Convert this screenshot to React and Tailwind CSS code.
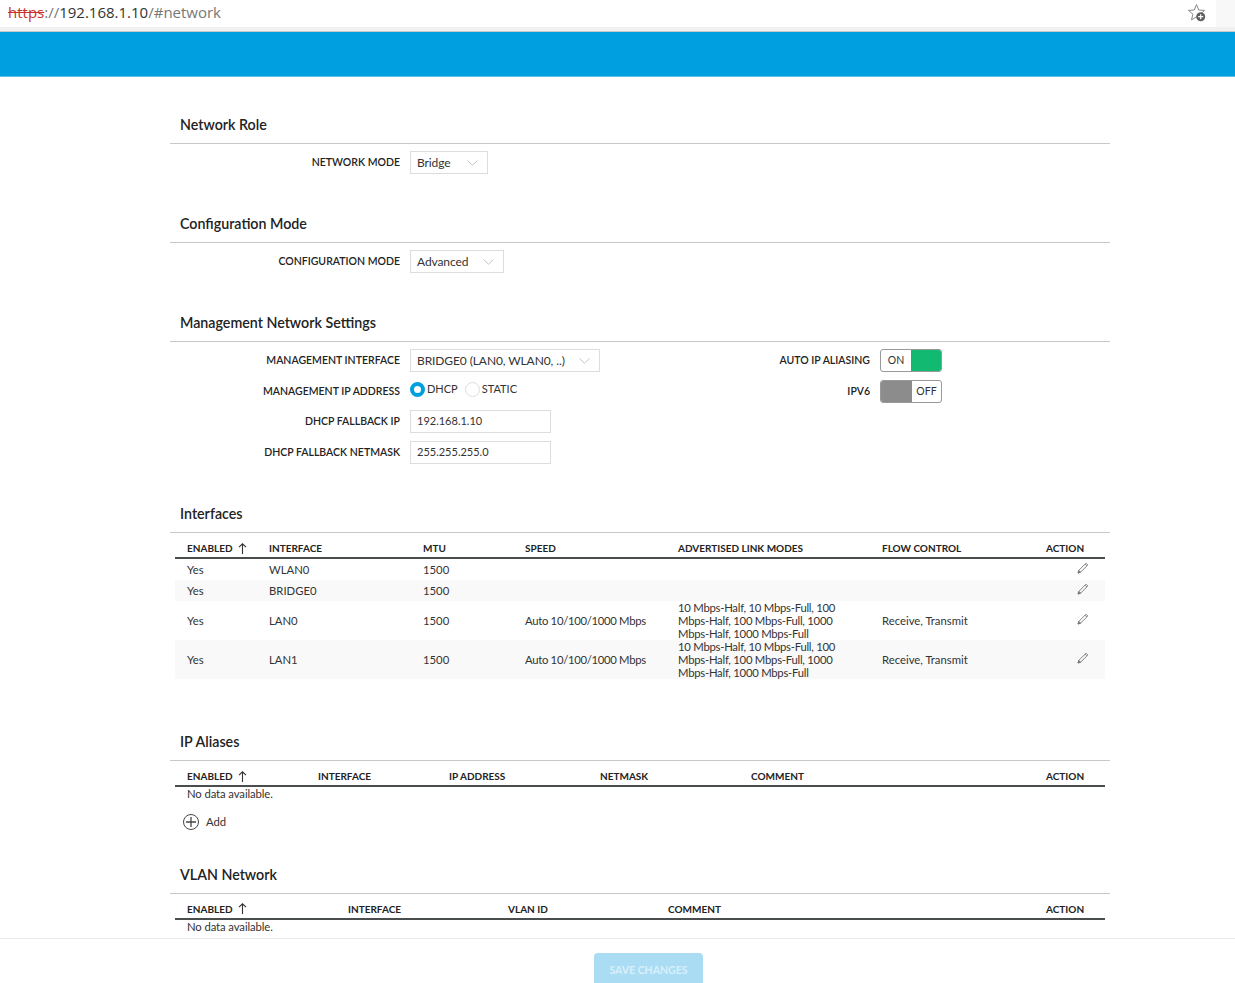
import React from 'react'

const cols1 = 'grid-cols-[82px_154px_102px_153px_204px_164px_71px]'
const cols2 = 'grid-cols-[131px_131px_151px_151px_295px_71px]'
const cols3 = 'grid-cols-[161px_160px_160px_378px_71px]'

const modes = '10 Mbps-Half, 10 Mbps-Full, 100 Mbps-Half, 100 Mbps-Full, 1000 Mbps-Half, 1000 Mbps-Full'

const rows = [
  { name: 'WLAN0', h: 'h-[21px]' },
  { name: 'BRIDGE0', h: 'h-[21px]', alt: true },
  { name: 'LAN0', h: 'h-[39px]', speed: 'Auto 10/100/1000 Mbps', modes, flow: 'Receive, Transmit' },
  { name: 'LAN1', h: 'h-[39px]', speed: 'Auto 10/100/1000 Mbps', modes, flow: 'Receive, Transmit', alt: true },
]

function SortArrow() {
  return (
    <svg width="9" height="11" viewBox="0 0 9 11" fill="none" stroke="#333" strokeWidth="1.1" className="ml-[5px]">
      <path d="M4.5 1v10M1 4.2 4.5 .8 8 4.2" />
    </svg>
  )
}

function Chevron() {
  return (
    <svg width="11" height="6" viewBox="0 0 11 6" fill="none" stroke="#c4c4c4" strokeWidth="1">
      <path d="M.5 .5 5.5 5.2 10.5 .5" />
    </svg>
  )
}

function PencilIcon() {
  return (
    <svg width="12" height="12" viewBox="0 0 12 12" fill="none" stroke="#777" strokeWidth="0.9">
      <path d="M9 1.2 10.8 3 3.6 10.2 1 11 1.8 8.4Z" />
      <path d="M8 2.2 9.8 4" />
      <path d="M1 11 1.8 8.4 3.6 10.2Z" fill="#777" />
    </svg>
  )
}

function SectionTitle({ children, className }) {
  return (
    <h2 className={`pl-[10px] pb-[8px] text-[14.25px] leading-[20px] font-semibold text-[#222] border-b border-[#c8c8c8] ${className}`}>
      {children}
    </h2>
  )
}

function Label({ children, className = '' }) {
  return (
    <label className={`w-[240px] pr-[10px] text-right text-[10.5px] font-semibold text-[#222] whitespace-nowrap ${className}`}>
      {children}
    </label>
  )
}

function Select({ value, width }) {
  return (
    <div className={`${width} h-[23px] flex items-center justify-between pl-[6px] pr-[9px] border border-[#ddd] text-[12px] tracking-[-0.1px] text-[#333]`}>
      <span className="whitespace-nowrap">{value}</span>
      <Chevron />
    </div>
  )
}

function Input({ value }) {
  return (
    <div className="w-[141px] h-[23px] flex items-center pl-[6px] border border-[#ddd] text-[11px] text-[#333]">{value}</div>
  )
}

function Radio({ label, checked }) {
  return (
    <span className="flex items-center text-[11px] text-[#333]">
      {checked
        ? <span className="w-[15px] h-[15px] rounded-full border-[4px] border-[#009fdf] bg-white" />
        : <span className="w-[15px] h-[15px] rounded-full border border-[#ddd] bg-white" />}
      <span className="ml-[2px]">{label}</span>
    </span>
  )
}

function Toggle({ on }) {
  return (
    <div className="w-[62px] h-[23px] flex border border-[#999] rounded-[3px] overflow-hidden text-[10.5px] text-[#333]">
      {on ? (
        <>
          <span className="w-[30px] flex items-center justify-center">ON</span>
          <span className="flex-1 bg-[#12b971]" />
        </>
      ) : (
        <>
          <span className="w-[31px] bg-[#8c8c8c]" />
          <span className="flex-1 flex items-center justify-center">OFF</span>
        </>
      )}
    </div>
  )
}

function TableHead({ cols, labels }) {
  return (
    <div className={`grid ${cols} h-[26px] pt-[8px] border-b-2 border-[#4a4d4e] text-[10px] leading-[14px] font-bold text-[#222]`}>
      {labels.map((l, i) => (
        <div key={l} className="pl-[12px] flex items-center whitespace-nowrap h-[14px]">
          {l}
          {i === 0 && <SortArrow />}
        </div>
      ))}
    </div>
  )
}

function NoData() {
  return <div className="pl-[12px] text-[11.3px] leading-[14px] text-[#333] tracking-[-0.1px]">No data available.</div>
}

export default function App() {
  return (
    <div className="h-[983px] flex flex-col overflow-hidden bg-white font-['Lato',sans-serif]">
      {/* browser bar */}
      <div className="h-[32px] flex flex-col border-b border-[#c9c9c9] bg-[#f1f1f1]">
        <div className="h-[27px] flex bg-[#f8f8f8]">
          <div className="w-[1216px] flex items-center justify-between pl-[8px] pr-[10px] pb-[3px] bg-white text-[15px] font-['Open_Sans',sans-serif]">
            <div className="whitespace-nowrap">
              <span className="text-[#c8322b] line-through">https</span>
              <span className="text-[#777]">://</span>
              <span className="text-[#333]">192.168.1.10</span>
              <span className="text-[#777]">/#network</span>
            </div>
            <svg width="18" height="18" viewBox="0 0 18 18" className="mt-[2px]">
              <path d="M8.5 .5 10.7 6 16.6 6.4 12.1 10.2 13.5 15.9 8.5 12.8 3.5 15.9 4.9 10.2 .4 6.4 6.3 6Z" fill="none" stroke="#888" strokeWidth="1" />
              <circle cx="12.7" cy="12.7" r="4.5" fill="#5f5f5f" />
              <path d="M12.7 10.2v5M10.2 12.7h5" stroke="#fff" strokeWidth="1.2" />
            </svg>
          </div>
        </div>
      </div>

      {/* blue header */}
      <div className="h-[45px] bg-[#009fdf] border-b border-[#5bbfe8] shrink-0" />

      <main className="flex-1 overflow-hidden pl-[170px] pr-[125px]">
        <SectionTitle className="mt-[38px]">Network Role</SectionTitle>
        <div className="mt-[7px] flex items-center">
          <Label>NETWORK MODE</Label>
          <Select value="Bridge" width="w-[78px]" />
        </div>

        <SectionTitle className="mt-[40px]">Configuration Mode</SectionTitle>
        <div className="mt-[7px] flex items-center">
          <Label>CONFIGURATION MODE</Label>
          <Select value="Advanced" width="w-[94px]" />
        </div>

        <SectionTitle className="mt-[40px]">Management Network Settings</SectionTitle>
        <div className="mt-[7px] flex">
          <div className="w-[470px] flex flex-col gap-[8px]">
            <div className="flex items-center">
              <Label>MANAGEMENT INTERFACE</Label>
              <Select value="BRIDGE0 (LAN0, WLAN0, ..)" width="w-[190px]" />
            </div>
            <div className="flex items-center h-[22px]">
              <Label className="mt-[1px]">MANAGEMENT IP ADDRESS</Label>
              <div className="flex gap-[7px] mb-[3px]">
                <Radio label="DHCP" checked />
                <Radio label="STATIC" />
              </div>
            </div>
            <div className="flex items-center">
              <Label>DHCP FALLBACK IP</Label>
              <Input value="192.168.1.10" />
            </div>
            <div className="flex items-center">
              <Label>DHCP FALLBACK NETMASK</Label>
              <Input value="255.255.255.0" />
            </div>
          </div>
          <div className="flex flex-col gap-[8px]">
            <div className="flex items-center">
              <Label>AUTO IP ALIASING</Label>
              <Toggle on />
            </div>
            <div className="flex items-center">
              <Label>IPV6</Label>
              <Toggle />
            </div>
          </div>
        </div>

        <SectionTitle className="mt-[40px]">Interfaces</SectionTitle>
        <div className="mx-[5px]">
          <TableHead cols={cols1} labels={['ENABLED', 'INTERFACE', 'MTU', 'SPEED', 'ADVERTISED LINK MODES', 'FLOW CONTROL', 'ACTION']} />
          {rows.map(r => (
            <div key={r.name} className={`grid ${cols1} ${r.h} items-center text-[11.3px] leading-[13px] text-[#333] ${r.alt ? 'bg-[#f9f9f9]' : ''}`}>
              <div className="pl-[12px]">Yes</div>
              <div className="pl-[12px]">{r.name}</div>
              <div className="pl-[12px]">1500</div>
              <div className="pl-[12px] whitespace-nowrap tracking-[-0.3px]">{r.speed}</div>
              <div className="pl-[12px] pr-[30px] tracking-[-0.25px]">{r.modes}</div>
              <div className="pl-[12px] whitespace-nowrap">{r.flow}</div>
              <div className="flex justify-end pr-[16px] pb-[4px]"><PencilIcon /></div>
            </div>
          ))}
        </div>

        <SectionTitle className="mt-[53px]">IP Aliases</SectionTitle>
        <div className="mx-[5px]">
          <TableHead cols={cols2} labels={['ENABLED', 'INTERFACE', 'IP ADDRESS', 'NETMASK', 'COMMENT', 'ACTION']} />
          <NoData />
          <div className="mt-[13px] ml-[8px] flex items-center gap-[7px] text-[11.3px] text-[#333]">
            <svg width="16" height="16" viewBox="0 0 16 16" fill="none" stroke="#444" strokeWidth="1">
              <circle cx="8" cy="8" r="7.5" />
              <path d="M8 3v10M3 8h10" strokeWidth="1.3" />
            </svg>
            Add
          </div>
        </div>

        <SectionTitle className="mt-[34px]">VLAN Network</SectionTitle>
        <div className="mx-[5px]">
          <TableHead cols={cols3} labels={['ENABLED', 'INTERFACE', 'VLAN ID', 'COMMENT', 'ACTION']} />
          <NoData />
        </div>
      </main>

      {/* save bar */}
      <footer className="h-[45px] shrink-0 border-t border-[#e8e8e8] flex justify-center pt-[14px] pl-[62px] overflow-hidden">
        <button className="w-[109px] h-[40px] rounded-t-[4px] bg-[#aadcf3] text-[10.5px] font-bold text-[#d9f0fa] pb-[5px]">
          SAVE CHANGES
        </button>
      </footer>
    </div>
  )
}
